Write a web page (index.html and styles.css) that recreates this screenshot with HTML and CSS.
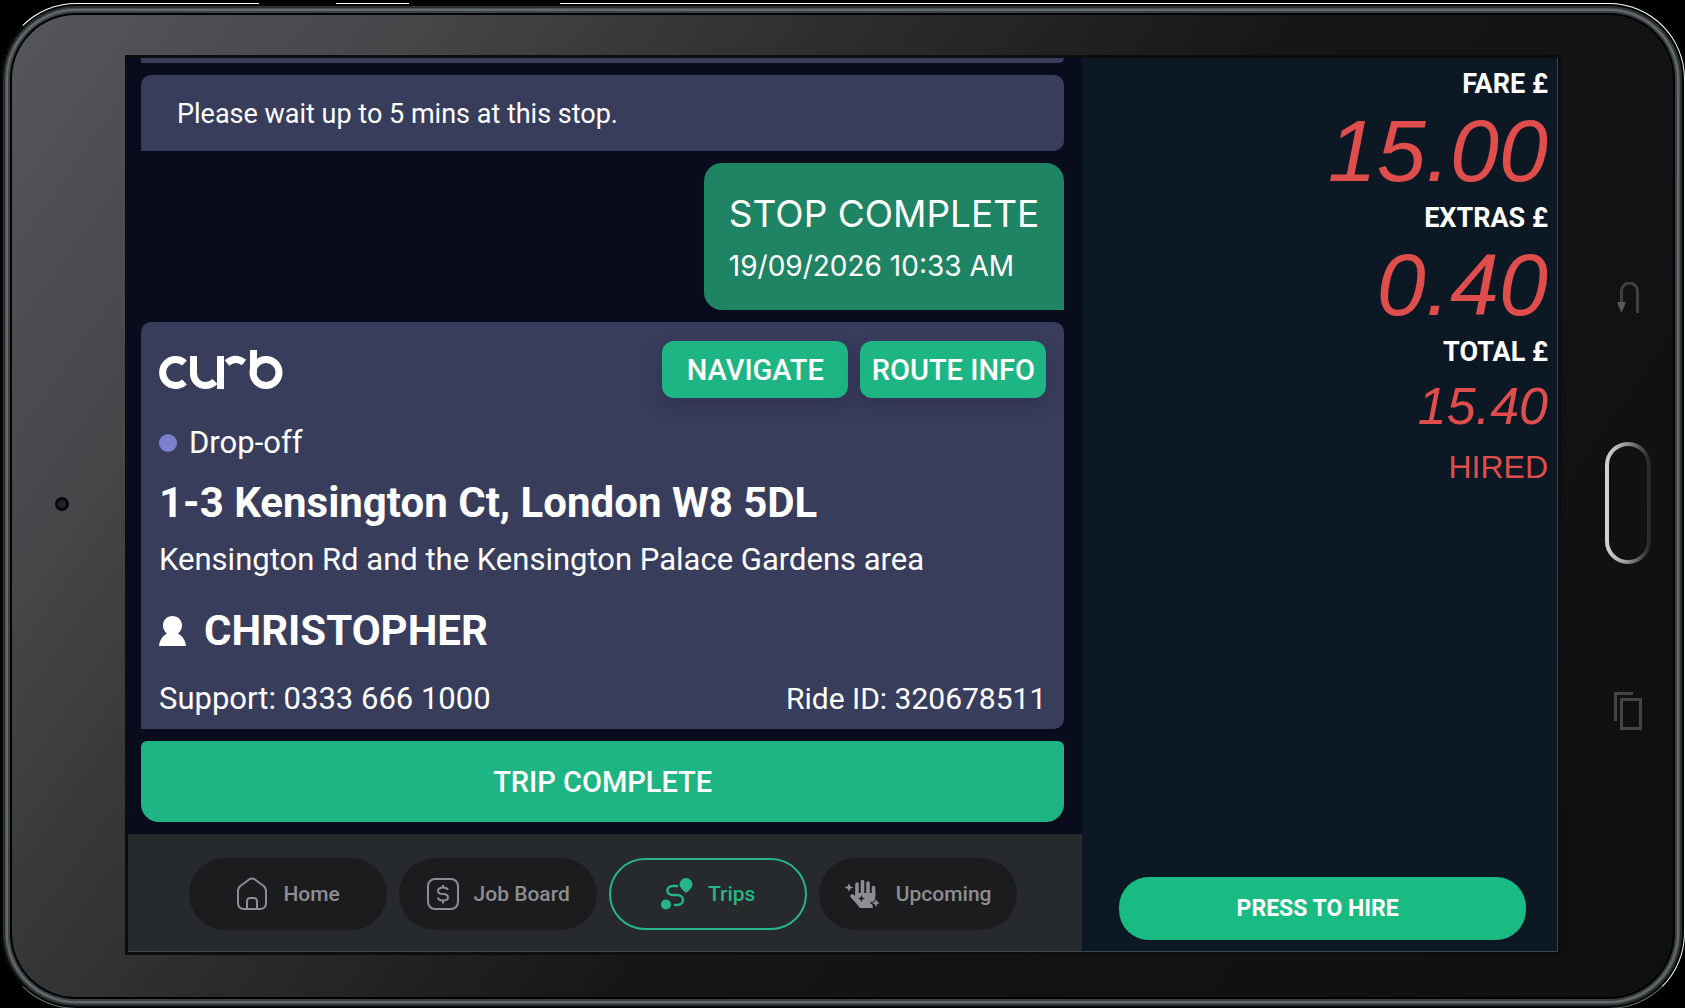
FILE: index.html
```html
<!DOCTYPE html>
<html lang="en">
  <head>
    <meta charset="UTF-8" />
    <meta name="viewport" content="width=device-width, initial-scale=1.0" />
    <title>Curb Driver - Trips</title>
    <link rel="stylesheet" href="styles.css">
  </head>
  <body>
    <div class="tablet">
      <div class="side-key power"></div>
      <div class="side-key volume"></div>

      <div class="bezel-left">
        <div class="camera"></div>
      </div>

      <div class="screen">
        <main class="trip-pane">
          <div class="feed">
            <div class="card previous"></div>
            <div class="card note">Please wait up to 5 mins at this stop.</div>

            <div class="stop-complete">
              <div class="stop-title">STOP COMPLETE</div>
              <div class="stop-time">19/09/2026 10:33 AM</div>
            </div>

            <section class="card job">
              <div class="job-header">
                <svg class="logo" viewBox="0 0 124 40" role="img" aria-label="curb">
                  <g fill="none" stroke="#fff" stroke-width="7">
                    <path d="M25.500 13A13 13 0 1 0 25.500 32" />
                    <path d="M34.500 6V24A12 12 0 0 0 46.500 35.500Q52 35.500 56 31.500" />
                    <path d="M61.500 6V39" />
                    <path d="M68 13Q76 6 85 12.500" />
                    <path d="M94.500 0V23" />
                    <circle cx="107" cy="22.500" r="13" />
                  </g>
                </svg>
                <div class="job-actions">
                  <button type="button" class="button">NAVIGATE</button>
                  <button type="button" class="button">ROUTE INFO</button>
                </div>
              </div>

              <div class="stage"><span class="dot"></span>Drop-off</div>
              <h1 class="address">1-3 Kensington Ct, London W8 5DL</h1>
              <div class="area">Kensington Rd and the Kensington Palace Gardens area</div>

              <h2 class="passenger">
                <svg width="27" height="30" viewBox="0 0 27 30" fill="#fff" aria-hidden="true">
                  <path d="M13.500 0C19 0 23 4 23 9.500C23 13 21.500 15.500 19 17.500C23.500 20 26.500 24.500 27 30H0C.5 24.500 3.500 20 8 17.500C5.500 15.500 4 13 4 9.500C4 4 8 0 13.500 0Z" />
                </svg>
                CHRISTOPHER
              </h2>

              <div class="job-footer">
                <span>Support: 0333 666 1000</span>
                <span class="ride-id">Ride ID: 320678511</span>
              </div>
            </section>

            <button type="button" class="trip-complete">TRIP COMPLETE</button>
          </div>

          <nav class="tabs">
            <a href="#home" class="tab">
              <svg width="32" height="34" viewBox="0 0 32 34" fill="none" stroke="currentColor" stroke-width="2" aria-hidden="true">
                <path d="M13 2.500Q16 .5 19 2.500L27 8.500Q30 10.500 30 14V26Q30 32 24 32H8Q2 32 2 26V14Q2 10.500 5 8.500Z" />
                <path d="M11 32V25Q11 21 14 21H18Q21 21 21 25V32" />
              </svg>
              Home
            </a>
            <a href="#jobs" class="tab">
              <svg width="32" height="32" viewBox="0 0 32 32" fill="none" stroke="currentColor" stroke-width="2" aria-hidden="true">
                <rect x="1" y="1" width="30" height="30" rx="7" />
                <path d="M21 12Q20 9.500 16 9.500Q11 9.500 11 13Q11 16 16 16Q21 16 21 19.500Q21 22.500 16 22.500Q11.500 22.500 11 19.500M16 7V10M16 22V25.500" />
              </svg>
              Job Board
            </a>
            <a href="#trips" class="tab active">
              <svg width="32" height="32" viewBox="0 0 32 32" aria-hidden="true">
                <path d="M16 8H12C4.500 8 4.500 17 12 17H16C24 17 24 27 16 27H14" fill="none" stroke="currentColor" stroke-width="2.500" stroke-linecap="round" />
                <circle cx="5" cy="26.500" r="5" fill="currentColor" />
                <path d="M25 0A6.500 6.500 0 0 1 31.500 6.500Q31.500 10 25 15Q18.500 10 18.500 6.500A6.500 6.500 0 0 1 25 0Z" fill="currentColor" />
              </svg>
              Trips
            </a>
            <a href="#upcoming" class="tab">
              <svg width="36" height="30" viewBox="0 0 36 30" aria-hidden="true">
                <g fill="none" stroke="currentColor" stroke-width="3.600" stroke-linecap="round">
                  <path d="M12 17V5M17.500 15V2.500M23 15V4M28.500 17V8.500M7 17L12 22" />
                </g>
                <path d="M10.200 14H30.300V20Q30.300 22 27 24L28 29H15L5.500 17.500Q8 14 11 18Z" fill="currentColor" />
                <path d="M4 4L5.200 7.300L8.500 8.500L5.200 9.700L4 13L2.800 9.700L-.5 8.500L2.800 7.300Z" fill="currentColor" />
                <path d="M31 18.500L32.500 22.500L36 24L32.500 25.500L31 29.500L29.500 25.500L25.500 24L29.500 22.500Z" fill="currentColor" stroke="#1b1c1e" stroke-width="1" />
                <path d="M16.500 16L17.500 18.500L20 19.500L17.500 20.500L16.500 23L15.500 20.500L13 19.500L15.500 18.500Z" fill="#1b1c1e" />
              </svg>
              Upcoming
            </a>
          </nav>
        </main>

        <aside class="meter">
          <div class="meter-label">FARE £</div>
          <div class="reading">15.00</div>
          <div class="meter-label">EXTRAS £</div>
          <div class="reading">0.40</div>
          <div class="meter-label">TOTAL £</div>
          <div class="reading small">15.40</div>
          <div class="status">HIRED</div>
          <button type="button" class="hire">PRESS TO HIRE</button>
        </aside>
      </div>

      <div class="bezel-right">
        <button type="button" class="key" aria-label="Back">
          <svg width="22" height="32" viewBox="0 0 22 32" fill="none" aria-hidden="true">
            <path d="M4.500 22V9A8 8 0 0 1 20.500 9V31" stroke="#404042" stroke-width="3" />
            <path d="M0 20H9L4.500 31Z" fill="#59595b" />
          </svg>
        </button>
        <button type="button" class="key" aria-label="Home">
          <svg width="46" height="122" viewBox="0 0 46 122" fill="none" aria-hidden="true">
            <defs>
              <linearGradient id="ring">
                <stop offset="0" stop-color="#d2d2d2" />
                <stop offset=".4" stop-color="#a5a5a5" />
                <stop offset="1" stop-color="#262628" />
              </linearGradient>
            </defs>
            <rect x="2" y="2" width="42" height="118" rx="21" stroke="url(#ring)" stroke-width="4" />
          </svg>
        </button>
        <button type="button" class="key" aria-label="Recent apps">
          <svg width="28" height="38" viewBox="0 0 28 38" fill="none" stroke="#444446" stroke-width="3" aria-hidden="true">
            <path d="M1.500 29V1.500H19" />
            <rect x="7.500" y="7.500" width="19" height="29" />
          </svg>
        </button>
      </div>
    </div>
  </body>
</html>
```

FILE: styles.css
```css
* {
  box-sizing: border-box;
}

body {
  margin: 0;
  padding-top: 3px;
  background-color: #000;
  color: #fff;
  font-family: Roboto, sans-serif;
}

button {
  border: none;
  padding: 0;
  color: #fff;
  font-family: inherit;
  cursor: pointer;
}

/* tablet body */
.tablet {
  position: relative;
  display: grid;
  grid-template-columns: 127px 1fr 126px;
  min-height: calc(100vh - 3px);
  border: 1px solid #fff;
  border-left-color: #000;
  border-bottom-color: #666;
  border-radius: 76px;
  background: linear-gradient(125deg, #56575b 0%, #454648 18%, #2c2d2f 36%, #161618 55%, #121214 75%, #0f0f10 100%);
  box-shadow: inset 0 0 0 2px #050606, inset 0 0 0 4px #2a2f30,
    inset 0 0 0 5px #4b5152, inset 0 0 0 7px #646a6b, inset 0 0 0 9px #3c4243,
    inset 0 0 0 11px #000;
}

.side-key {
  position: absolute;
  top: -4px;
  height: 4px;
  background-color: #000;
}

.power {
  left: 258px;
  width: 77px;
}

.volume {
  left: 408px;
  width: 151px;
}

.bezel-left {
  display: flex;
  align-items: center;
  justify-content: center;
  padding: 0 6px 4px 0;
}

.camera {
  width: 14px;
  height: 14px;
  border: 3px solid #08080a;
  border-radius: 50%;
  background-color: #1c2331;
}

.bezel-right {
  display: flex;
  flex-direction: column;
  align-items: center;
  justify-content: center;
  gap: 128px;
  padding-left: 14px;
}

.key {
  background: none;
}

.key svg {
  display: block;
}

.screen {
  display: grid;
  grid-template-columns: 955fr 475fr;
  margin: 54px 0 56px;
  border-right: 1px solid #3c464d;
  border-bottom: 1px solid #3c464d;
  box-shadow: 0 0 0 3px #0c0d0e;
}

/* trip feed */
.trip-pane {
  display: flex;
  flex-direction: column;
  background-color: #090c1c;
}

.feed {
  flex: 1;
  display: flex;
  flex-direction: column;
  gap: 12px;
  padding: 0 18px 12px 13px;
}

.card {
  background-color: #383d5c;
  border-radius: 10px 10px 10px 0;
}

.previous {
  height: 5px;
  border-radius: 0 0 10px 0;
}

.note {
  padding: 21px 36px 19px;
  font-size: 27px;
  line-height: 36px;
}

.stop-complete {
  align-self: flex-end;
  padding: 27px 25px 20px;
  border-radius: 18px 18px 0 18px;
  background-color: #1f8463;
  font-family: Inter, sans-serif;
}

.stop-title {
  margin-bottom: 4px;
  font-size: 37px;
  line-height: 48px;
}

.stop-time {
  font-size: 28px;
  line-height: 48px;
}

.job {
  padding: 19px 18px 12px;
}

.job-header {
  display: flex;
  justify-content: space-between;
  margin-bottom: 27px;
}

.logo {
  width: 124px;
  height: 40px;
  margin-top: 9px;
}

.job-actions {
  display: flex;
  gap: 12px;
}

.button {
  width: 186px;
  height: 57px;
  border-radius: 12px;
  background-color: #1eb584;
  font-size: 29px;
  font-weight: 500;
  box-shadow: 0 8px 18px rgba(40, 30, 60, 0.35);
}

.stage,
.area,
.job-footer {
  font-size: 31px;
  line-height: 36px;
}

.stage {
  display: flex;
  align-items: center;
  gap: 12px;
}

.dot {
  width: 18px;
  height: 18px;
  border-radius: 50%;
  background-color: #7c81cf;
}

.address,
.passenger {
  margin: 18px 0 15px;
  font-size: 42px;
  font-weight: 700;
  line-height: 48px;
}

.passenger {
  display: flex;
  align-items: center;
  gap: 18px;
  margin: 29px 0 26px;
}

.job-footer {
  display: flex;
  justify-content: space-between;
}

.ride-id {
  font-size: 30px;
}

.trip-complete {
  height: 81px;
  border-radius: 6px 6px 18px 18px;
  background-color: #1eb584;
  font-size: 29px;
  font-weight: 500;
}

/* bottom tabs */
.tabs {
  display: flex;
  justify-content: center;
  gap: 12px;
  padding: 24px 4px 21px 0;
  background-color: #272a2c;
}

.tab {
  display: flex;
  align-items: center;
  justify-content: center;
  gap: 15px;
  width: 198px;
  height: 72px;
  border-radius: 36px;
  background-color: #1b1c1e;
  color: #8e8d94;
  font-size: 21px;
  font-weight: 500;
  text-decoration: none;
}

.tab.active {
  border: 2px solid #26b586;
  background: none;
  color: #26b586;
}

/* taxi meter */
.meter {
  display: flex;
  flex-direction: column;
  align-items: flex-end;
  padding: 10px 9px 11px;
  background-color: #0c1823;
}

.meter-label {
  font-size: 27px;
  font-weight: 700;
  line-height: 32px;
}

.reading {
  margin-bottom: 1px;
  color: #df4e4c;
  font-family: "Liberation Sans", sans-serif;
  font-size: 88px;
  font-style: italic;
  line-height: 101px;
}

.reading.small {
  margin: 0;
  font-size: 52px;
  line-height: 76px;
}

.status {
  color: #df4e4c;
  font-family: "Liberation Sans", sans-serif;
  font-size: 32px;
  line-height: 46px;
}

.hire {
  align-self: stretch;
  height: 63px;
  margin: auto 22px 0 28px;
  padding-right: 10px;
  border-radius: 30px;
  background-color: #1abb83;
  font-size: 23px;
  font-weight: 700;
}
```
